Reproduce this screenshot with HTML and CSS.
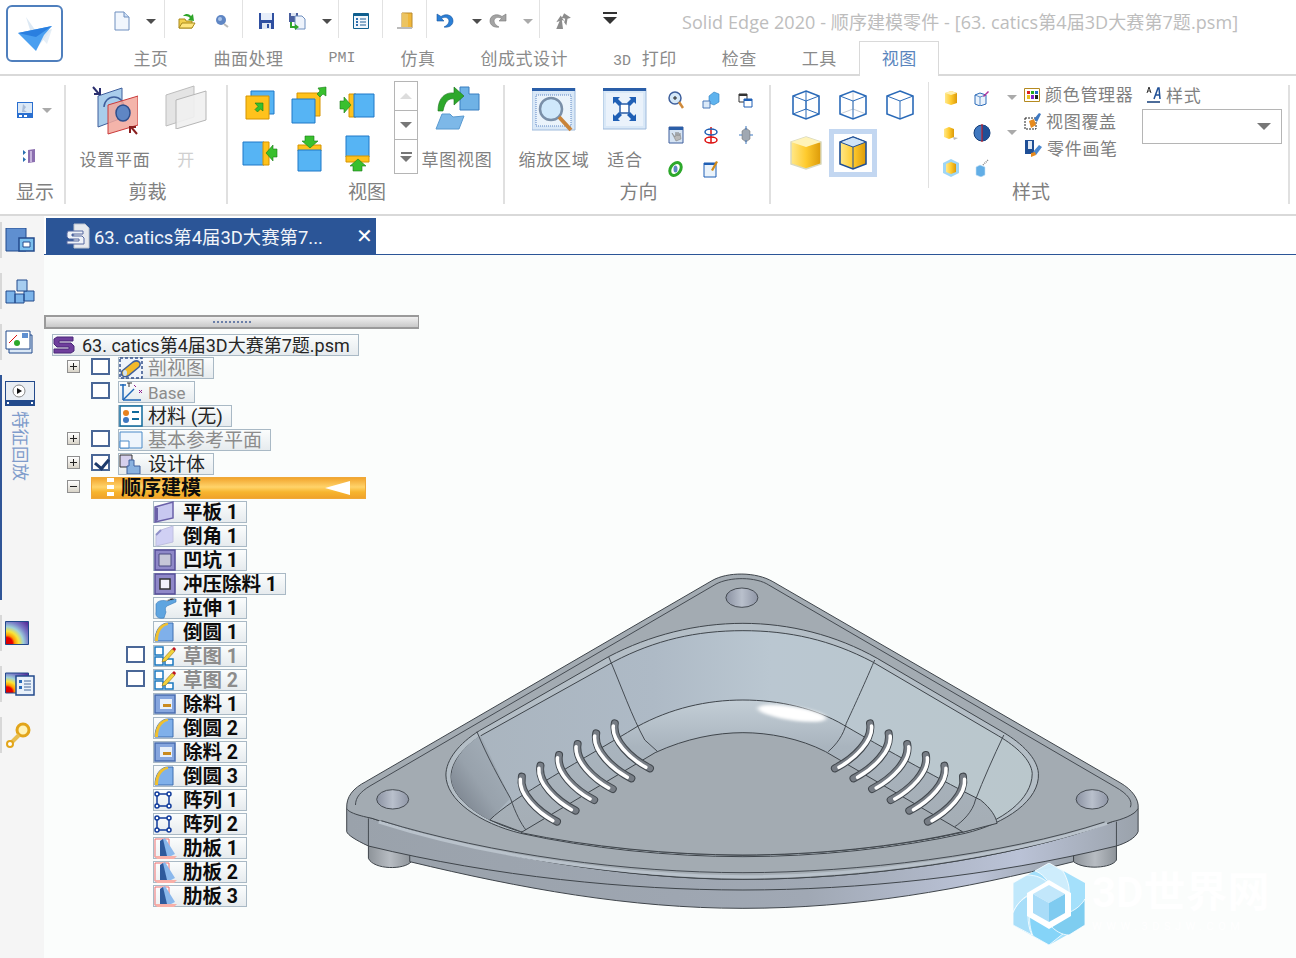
FILE: index.html
```html
<!DOCTYPE html>
<html lang="zh-CN">
<head>
    <meta charset="UTF-8">
    <title>Solid Edge 2020</title>
    <link rel="stylesheet" href="styles.css">
</head>
<body>

<!-- ICONS -->
<svg class="defs" width="0" height="0">
    <symbol id="new" viewBox="0 0 16 20"><path d="M1 1h9l5 5v13H1z" fill="#f1f6fd" stroke="#6f8fbf"/><path d="M10 1v5h5" fill="#cfe0f5" stroke="#6f8fbf"/></symbol>
    <symbol id="open" viewBox="0 0 18 18"><path d="M1 16V7h6l1 2h6v7z" fill="#f2cf4e" stroke="#a98a1c"/><path d="M1 16l3-5h13l-3 5z" fill="#ffe680" stroke="#a98a1c"/><path d="M5 4c3-3 6-2 8 0l2-2 1 7-6-1 2-2c-2-2-4-2-7-2z" fill="#2fa52a"/></symbol>
    <symbol id="ball" viewBox="0 0 14 14"><circle cx="6" cy="6" r="5" fill="#5f86c4"/><circle cx="5" cy="5" r="2" fill="#a9c3e8"/><path d="M9 10l4 3" stroke="#bbb" stroke-width="2"/></symbol>
    <symbol id="save" viewBox="0 0 17 16"><path d="M1 0h15v16H1z" fill="#2f4fa0"/><path d="M3 0h11v7H3z" fill="#e7eefa"/><path d="M4 10h9v6H4z" fill="#dfe6f2"/><path d="M9 11h2v4H9z" fill="#2f4fa0"/></symbol>
    <symbol id="saveas" viewBox="0 0 17 17"><path d="M0 0h9v9H0z" fill="#4a5f9e"/><path d="M2 0h5v3H2z" fill="#dfe6f2"/><path d="M6 3h7l3 3v10H6z" fill="#eef3fb" stroke="#6f8fbf"/><path d="M3 9v4h3v-2l4 3-4 3v-2H1V9z" fill="#2fa52a"/></symbol>
    <symbol id="list" viewBox="0 0 16 16"><path d="M.5.5h15v15H.5z" fill="#f1f7fd" stroke="#0f5f8f"/><path d="M1 1h14v2H1z" fill="#0f5f8f"/><path d="M3 5h2v2H3zM3 8h2v2H3zM3 11h2v2H3z" fill="#2f6fb0"/><path d="M7 6h6M7 9h6M7 12h6" stroke="#1d5f96"/></symbol>
    <symbol id="door" viewBox="0 0 17 18"><path d="M6 1h10v15H6z" fill="#f0b73a" stroke="#b88a30"/><path d="M6 1l6 1v15l-6-1z" fill="#ecc462"/><path d="M1 16h15" stroke="#bbb" stroke-width="2"/></symbol>
    <symbol id="undo" viewBox="0 0 18 16"><path d="M1 1v7h7L5.500 5.500C9 3 13 5 13 8s-3 5-5 6c5 1 9-2 9-6 0-6-7-8-12-4.500z" fill="#2a7fd6" stroke="#1a55a0" stroke-width=".6"/></symbol>
    <symbol id="redo" viewBox="0 0 18 16"><g transform="matrix(-1 0 0 1 18 0)"><path d="M1 1v7h7L5.500 5.500C9 3 13 5 13 8s-3 5-5 6c5 1 9-2 9-6 0-6-7-8-12-4.500z" fill="#a4a4a4" stroke="#777" stroke-width=".6"/></g></symbol>
    <symbol id="arrows" viewBox="0 0 16 16"><path d="M2 15l3-7-3 1 4-6 3 5-2-1 1 8zM9 1l6 4-3 1-1 6-2-3 1-3-3-1z" fill="#8c8c8c"/></symbol>

    <symbol id="display" viewBox="0 0 16 16"><path d="M0 0h16v16H0z" fill="#2a6fd0"/><path d="M1 1h14v10H1z" fill="#dbe8f6"/><path d="M6 2l3 3-2 3 3 2H5z" fill="#a8bcd8"/><path d="M2 13h3v2H2zM7 13h3v2H7z" fill="#fff"/></symbol>
    <symbol id="fit-book" viewBox="0 0 14 16"><path d="M6 2l7-1v13l-7 1z" fill="#8c6fb0"/><path d="M8 3h2v11H8z" fill="#c6b4dc"/><path d="M1 2l3 2.500L1 7zM1 9l3 2.500L1 14z" fill="#2a6fb0"/></symbol>
    <symbol id="plane-set" viewBox="0 0 46 50">
        <path d="M6 11l24-8v30L6 42z" fill="#a9cdeb" stroke="#3e5f9c"/>
        <path d="M12 22a10 10 0 0 1 20 0" fill="none" stroke="#3e5f9c" stroke-width="1.500"/>
        <path d="M16 20l30-9v29l-30 9z" fill="#f2a79b" fill-opacity=".85" stroke="#c93a3a"/>
        <ellipse cx="31" cy="28" rx="7" ry="8" fill="#5f86c4" stroke="#2f4f8c" stroke-width="1.500"/>
        <path d="M1 2l6 7M8 3v6H2" stroke="#2b2f6f" stroke-width="2" fill="none"/>
        <path d="M45 49l-6-7M38 48v-6h6" stroke="#8a1f1f" stroke-width="2" fill="none"/>
    </symbol>
    <symbol id="plane-off" viewBox="0 0 42 44"><path d="M1 10l28-9v31L1 41z" fill="#e4e4e4" stroke="#bdbdbd"/><path d="M11 15l30-9v29l-30 9z" fill="#efefef" fill-opacity=".9" stroke="#b5b5b5"/></symbol>

    <symbol id="v1" viewBox="0 0 30 30"><path d="M6 1h23v23H6z" fill="#56b4f4" stroke="#1e78c8"/><path d="M1 6h23v23H1z" fill="#ffc21c" stroke="#d69400"/><path d="M10 13h8v8l-2.500-2-3 3-2.500-2.500 3-3z" fill="#39c02e" stroke="#1a7a18" stroke-width=".6"/></symbol>
    <symbol id="v2" viewBox="0 0 36 38"><path d="M6 7h23v23H6z" fill="#ffc21c" stroke="#d69400"/><path d="M1 13h23v24H1z" fill="#56b4f4" stroke="#1e78c8"/><path d="M35 1v9l-3-2-3 3-3-3 3-3-2-3z" fill="#39c02e" stroke="#1a7a18" stroke-width=".6"/></symbol>
    <symbol id="v3" viewBox="0 0 36 26"><path d="M10 2h7v23h-7z" fill="#ffc21c" stroke="#d69400"/><path d="M15 2h20v23H15z" fill="#56b4f4" stroke="#1e78c8"/><path d="M1 9h4V5l7 8-7 8v-4H1z" fill="#39c02e" stroke="#1a7a18" stroke-width=".6"/></symbol>
    <symbol id="v4" viewBox="0 0 36 26"><path d="M1 2h21v23H1z" fill="#56b4f4" stroke="#1e78c8"/><path d="M21 2h6v23h-6z" fill="#ffc21c" stroke="#d69400"/><path d="M35 9h-4V5l-7 8 7 8v-4h4z" fill="#39c02e" stroke="#1a7a18" stroke-width=".6"/></symbol>
    <symbol id="v5" viewBox="0 0 26 37"><path d="M2 10h23v6H2z" fill="#ffc21c" stroke="#d69400"/><path d="M2 15h23v21H2z" fill="#56b4f4" stroke="#1e78c8"/><path d="M9 1h9v5h4l-8 7-8-7h3z" fill="#39c02e" stroke="#1a7a18" stroke-width=".6"/></symbol>
    <symbol id="v6" viewBox="0 0 26 37"><path d="M2 1h23v21H2z" fill="#56b4f4" stroke="#1e78c8"/><path d="M2 21h23v6H2z" fill="#ffc21c" stroke="#d69400"/><path d="M9 36h9v-5h4l-8-7-8 7h3z" fill="#39c02e" stroke="#1a7a18" stroke-width=".6"/></symbol>
    <symbol id="sketchview" viewBox="0 0 46 46"><path d="M26 2h9v7h10v16H26z" fill="#6fb2e6" stroke="#3b7fc0"/><path d="M2 44l6-15h8l3 3 11-1-5 13z" fill="#7db8e8" stroke="#5a9ad0"/><path d="M4 26C4 12 12 7 20 8V2l10 9-10 9v-6c-5-1-9 2-11 12z" fill="#2da82b" stroke="#17701a" stroke-width=".6"/></symbol>

    <symbol id="zoomarea" viewBox="0 0 44 48"><path d="M0 0h43v42H0z" fill="#d9e8f7" stroke="#9fbbdc"/><path d="M0 0h43v3H0z" fill="#2a5ea8"/><path d="M4 7h35v31H4z" fill="#eaf3fb" stroke="#5f86c4" stroke-dasharray="1 1"/><circle cx="19" cy="21" r="11" fill="#cfe8fb" stroke="#7a8fa8" stroke-width="2.500"/><path d="M27 29l12 13" stroke="#c9843a" stroke-width="4"/></symbol>
    <symbol id="fit" viewBox="0 0 44 42"><path d="M0 0h43v41H0z" fill="#d9e8f7" stroke="#9fbbdc"/><path d="M0 0h43v3H0z" fill="#2a5ea8"/><path d="M3 5h37v33H3z" fill="#eaf2fb"/><path d="M17 16h9v9h-9z" fill="#fff" stroke="#2a5ea8" stroke-width="1.500"/><path d="M10 9h7l-2 2 4 4-3 3-4-4-2 2zM33 9h-7l2 2-4 4 3 3 4-4 2 2zM10 33h7l-2-2 4-4-3-3-4 4-2-2zM33 33h-7l2-2-4-4 3-3 4 4 2-2z" fill="#1f5fb5"/></symbol>
    <symbol id="mag" viewBox="0 0 16 18"><circle cx="7" cy="7" r="6" fill="#d6e9f8" stroke="#3e5f9c" stroke-width="1.500"/><path d="M5 7h4M7 5v4" stroke="#222"/><path d="M11 11l4 6" stroke="#d08a3a" stroke-width="2.500"/></symbol>
    <symbol id="cube-mv" viewBox="0 0 18 18"><path d="M7 5l5-4 5 2v8l-5 3-5-2z" fill="#5fb3ee" stroke="#2f7fc0" stroke-width=".6"/><path d="M1 10h7v7H1z" fill="#dbe9f8" stroke="#4a78b8"/></symbol>
    <symbol id="windows" viewBox="0 0 15 15"><path d="M1 1h8v8H1z" fill="#fff" stroke="#333"/><path d="M1 1h8v2H1z" fill="#333"/><path d="M6 6h8v8H6z" fill="#fff" stroke="#1f5fb5"/><path d="M6 6h8v2H6z" fill="#1f5fb5"/></symbol>
    <symbol id="hand" viewBox="0 0 16 18"><path d="M1 1h14v16H1z" fill="#d5e3f3" stroke="#3e5f9c"/><path d="M1 1h14v3H1z" fill="#2a5ea8"/><path d="M4 7l4 8 5-2-1-6-1 3-1-4-1 4-1-4-1 5z" fill="#b9b9b9" stroke="#777" stroke-width=".5"/></symbol>
    <symbol id="rotate" viewBox="0 0 16 18"><path d="M8 1v16" stroke="#d11" stroke-width="1.500"/><ellipse cx="8" cy="6" rx="6" ry="3" fill="none" stroke="#1f5fb5" stroke-width="1.500"/><ellipse cx="8" cy="14" rx="6" ry="3" fill="none" stroke="#d11" stroke-width="1.500"/></symbol>
    <symbol id="spin" viewBox="0 0 14 18"><path d="M3 5l4-3 4 3v8l-4 3-4-3z" fill="#a0a8b2" stroke="#666" stroke-width=".5"/><path d="M7 0v4M7 14v4M0 9h3M11 9h3" stroke="#3f78c0"/></symbol>
    <symbol id="orbit" viewBox="0 0 15 18"><ellipse cx="7.500" cy="9" rx="5" ry="7" fill="none" stroke="#2da82b" stroke-width="3" transform="rotate(35 7.500 9)"/><ellipse cx="7.500" cy="9" rx="2" ry="3.500" fill="#5f86c4"/></symbol>
    <symbol id="note" viewBox="0 0 15 18"><path d="M1 3h12v14H1z" fill="#eaf3fb" stroke="#1f5fb5"/><path d="M1 3h12v2H1z" fill="#1f5fb5"/><path d="M8 10l5-9 2 1-5 9z" fill="#d08a1a"/></symbol>

    <symbol id="box-wire" viewBox="0 0 30 30"><path d="M15 1l13 5v18l-13 5-13-5V6z" fill="none" stroke="#2a6ab8" stroke-width="1.600"/><path d="M2 6l13 5 13-5M15 11v18M2 24l13-5 13 5M15 1v18" fill="none" stroke="#2a6ab8"/></symbol>
    <symbol id="box-gray" viewBox="0 0 30 30"><path d="M2 24l13-5 13 5M15 1v18" fill="none" stroke="#c8ced6"/><path d="M15 1l13 5v18l-13 5-13-5V6z" fill="none" stroke="#2a6ab8" stroke-width="1.600"/><path d="M2 6l13 5 13-5M15 11v18" fill="none" stroke="#2a6ab8"/></symbol>
    <symbol id="box-hidden" viewBox="0 0 30 30"><path d="M15 1l13 5v18l-13 5-13-5V6z" fill="none" stroke="#2a6ab8" stroke-width="1.600"/><path d="M2 6l13 5 13-5M15 11v18" fill="none" stroke="#2a6ab8"/></symbol>
    <linearGradient id="yel" x1="0" x2="1" y1="0" y2="0"><stop offset="0" stop-color="#ffe88a"/><stop offset=".5" stop-color="#ffcb2e"/><stop offset="1" stop-color="#dc9a08"/></linearGradient>
    <radialGradient id="hg" cx="0.05" cy="0.95" r="1.250"><stop offset="0" stop-color="#d80000"/><stop offset=".2" stop-color="#e80000"/><stop offset=".28" stop-color="#ff9a00"/><stop offset=".42" stop-color="#f8e63a"/><stop offset=".58" stop-color="#9fd0d8"/><stop offset=".75" stop-color="#7a7fc8"/><stop offset="1" stop-color="#5a2f9c"/></radialGradient>
    <symbol id="box-solid" viewBox="0 0 34 34"><path d="M17 1l15 5v22l-15 5-15-5V6z" fill="url(#yel)" stroke="#d9d9c0" stroke-width="1.500"/><path d="M2 6l15 5 15-5-15-5z" fill="#fff3b8"/></symbol>
    <symbol id="box-edge" viewBox="0 0 30 34"><path d="M15 1l13 5v22l-13 5-13-5V6z" fill="url(#yel)" stroke="#1f4f96" stroke-width="1.600"/><path d="M2 6l13 5 13-5-13-5z" fill="#cfe3f6" stroke="#1f4f96"/><path d="M15 11v22" stroke="#1f4f96"/></symbol>
    <symbol id="s-gold" viewBox="0 0 14 16"><path d="M7 1l6 2v10l-6 2-6-2V3z" fill="url(#yel)"/><path d="M1 3l6 2 6-2-6-2z" fill="#fff0b0"/></symbol>
    <symbol id="s-wire" viewBox="0 0 16 16"><path d="M6 3l6 2v9l-6 2-5-2V5z" fill="#eaf2fb" stroke="#2a6ab8"/><path d="M1 5l5 2 6-2M6 7v9" fill="none" stroke="#2a6ab8" stroke-width=".7"/><path d="M9 6l5-5 1 1-5 5z" fill="#b0309a"/></symbol>
    <symbol id="s-shadow" viewBox="0 0 16 14"><path d="M6 1l5 2v8l-5 2-5-2V3z" fill="url(#yel)"/><path d="M10 11l5 1-4 2z" fill="#bbb"/></symbol>
    <symbol id="s-sphere" viewBox="0 0 18 18"><circle cx="9" cy="9" r="8" fill="#3f78c0" stroke="#123c78"/><path d="M9 1a8 8 0 0 1 0 16z" fill="#1f4f96"/><path d="M9 0v18" stroke="#d11"/></symbol>
    <symbol id="s-glow" viewBox="0 0 16 18"><path d="M8 0l8 4v10l-8 4-8-4V4z" fill="#9fd6f6"/><path d="M8 3l5 2v8l-5 2-5-2V5z" fill="url(#yel)"/></symbol>
    <symbol id="s-spray" viewBox="0 0 16 18"><path d="M6 6l5 2v8l-4 2-5-2V8z" fill="#62aee6" stroke="#c9e2f6" stroke-width=".6"/><path d="M9 6l5-5" stroke="#888" stroke-dasharray="1 1" stroke-width="1.500"/></symbol>
    <symbol id="c-color" viewBox="0 0 16 16"><path d="M.5 2.500h15v13H.5z" fill="#fff" stroke="#b58a20"/><path d="M3 5h3v3H3z" fill="#d22"/><path d="M7 5h3v3H7z" fill="#2a2"/><path d="M11 5h3v3h-3z" fill="#26c"/><path d="M3 9h3v4H3z" fill="#e7c122"/><path d="M7 9h3v4H7z" fill="#82c"/><path d="M11 9h3v4h-3z" fill="#222"/></symbol>
    <symbol id="c-over" viewBox="0 0 17 18"><path d="M1 6h11v11H1z" fill="#fff" stroke="#222" stroke-dasharray="2 1"/><path d="M5 9l5-2 2 6-5 3z" fill="#e58a1f"/><path d="M10 7l5-6 2 1-4 8z" fill="#3f78c0"/></symbol>
    <symbol id="c-brush" viewBox="0 0 18 18"><path d="M1 1h9v14H1z" fill="#1f4f96"/><path d="M4 2h4v8H4z" fill="#dfe8f4"/><path d="M9 13l6-7 3 2-6 8z" fill="#4a88d0"/><path d="M7 14l4-1 1 3-5 2z" fill="#e58a1f"/></symbol>
    <symbol id="c-style" viewBox="0 0 15 17"><path d="M1 16h13" stroke="#123c78" stroke-width="1.500"/><path d="M8 13l4-11h1l1 11M9 9h4" fill="none" stroke="#1f4f96" stroke-width="1.500"/><path d="M1 7l2-6 2 6M2 5h2" fill="none" stroke="#333"/></symbol>

    <symbol id="t-doc" viewBox="0 0 24 26"><path d="M8 1h11l4 4v20H8z" fill="#e6e9ee" stroke="#bcc3cd"/><path d="M2 8h15v3H6v2h10l2 2v6H1v-3h12v-2H3l-2-2v-4z" fill="#eef2f8" stroke="#5668a0" stroke-width="1"/></symbol>
    <symbol id="t-s" viewBox="0 0 22 18"><path d="M4 1h16v4H6v2h12l3 3v5l-3 2H1v-4h15v-2H4L1 8V3z" fill="#6f3f9c" stroke="#4a2878"/></symbol>
    <symbol id="t-section" viewBox="0 0 24 22"><path d="M1 1h22v20H1z" fill="#eef3fb" stroke="#33508c" stroke-dasharray="3 2" stroke-width="1.500"/><path d="M3 14L14 5c5-3 9 1 6 5L9 19c-5 2-8-1-6-5z" fill="#f2b92b" stroke="#3e5f9c" stroke-width="1.500"/><ellipse cx="6" cy="16" rx="2" ry="3" fill="#cfe3f6"/></symbol>
    <symbol id="t-base" viewBox="0 0 24 22"><path d="M4 19V3M1 4h6M4 19h18" stroke="#2068b8" stroke-width="1.500"/><path d="M4 19L15 8" stroke="#2068b8" stroke-width="1.500"/><path d="M8 2h5M10 2v4" stroke="#333"/><path d="M15 4l2 2M20 9l3 3m0-3l-3 3" stroke="#90208f"/></symbol>
    <symbol id="t-mat" viewBox="0 0 24 22"><path d="M1 1h22v20H1z" fill="#fff" stroke="#0f6a9c" stroke-width="1.500"/><circle cx="7" cy="8" r="3" fill="#e8821e"/><circle cx="7" cy="15" r="3" fill="#3f78c0"/><path d="M13 7h7M13 14h7" stroke="#0f6a9c" stroke-width="2"/></symbol>
    <symbol id="t-plane" viewBox="0 0 24 20"><path d="M1 2h22v16H1z" fill="#eef5fc" stroke="#4a8ac8"/><path d="M1 11h9v7H1z" fill="#fff" stroke="#4a8ac8"/></symbol>
    <symbol id="t-body" viewBox="0 0 22 20"><path d="M1 1h12v12H1z" fill="#d6d0ec" stroke="#333"/><path d="M10 6h5v6h6v8H8v-8h2z" fill="#8ab2e0" stroke="#3e5f9c"/></symbol>
    <symbol id="t-plate" viewBox="0 0 22 22"><path d="M1 6L19 1v16L1 21z" fill="#c8c8f0" stroke="#6a60a8" stroke-width="1.500"/><path d="M1 6l3 1v12l-3 2z" fill="#6a60a8"/></symbol>
    <symbol id="t-chamfer" viewBox="0 0 22 22"><path d="M7 5L19 1v16L2 21V10z" fill="#d0d0f4" stroke="#c0c0e0"/><path d="M2 10l5-5" stroke="#8f8fc8" stroke-width="2"/></symbol>
    <symbol id="t-dimple" viewBox="0 0 22 22"><path d="M1 1h20v20H1z" fill="#8f88c8" stroke="#564e98" stroke-width="1.500"/><path d="M5 5h12v12H5z" fill="#c6c6d8" stroke="#4a4a80"/></symbol>
    <symbol id="t-punch" viewBox="0 0 22 22"><path d="M1 1h20v20H1z" fill="#8f88c8" stroke="#564e98" stroke-width="1.500"/><path d="M6 6h10v10H6z" fill="#f2f2fa" stroke="#333" stroke-width="1.500"/></symbol>
    <symbol id="t-extrude" viewBox="0 0 24 22"><path d="M2 7c2-4 8-4 11-3l9-2v3l-9 4c-2 1-2 4-1 6l-2 6c-5 1-9-1-8-6z" fill="#5fa5e0" stroke="#3a7ab8" stroke-width=".6"/><path d="M12 4l6-3 3 1" stroke="#bbb"/></symbol>
    <symbol id="t-round" viewBox="0 0 20 20"><path d="M1 19C1 9 6 1 14 1h5v18z" fill="#7fb0ea" stroke="#3e6fb0"/><path d="M1 19C1 9 6 1 14 1v2C8 4 4 10 4 19z" fill="#f0c030"/></symbol>
    <symbol id="t-sketch" viewBox="0 0 22 20"><path d="M1 1h8v8H1zM1 11h8v8H1zM11 13h8v6h-8z" fill="#fff" stroke="#1a78c0" stroke-width="1.500"/><path d="M9 13L18 3l3 2-9 10-4 1z" fill="#f2d13c" stroke="#7a5f10" stroke-width=".5"/><path d="M18 3l2-2 2 2-1 2z" fill="#c0141c"/></symbol>
    <symbol id="t-cut" viewBox="0 0 22 20"><path d="M1 1h20v18H1z" fill="#86a6de" stroke="#4a6db0" stroke-width="1.500"/><path d="M6 5h12v10H6z" fill="#e8f0fa"/><path d="M9 10h8v3H9z" fill="#c98a1e"/></symbol>
    <symbol id="t-pattern" viewBox="0 0 18 18"><path d="M3 3h12v12H3z" fill="none" stroke="#123c9c" stroke-width="1.500"/><circle cx="3" cy="3" r="2" fill="#fff" stroke="#123c9c" stroke-width="1.500"/><circle cx="15" cy="3" r="2" fill="#fff" stroke="#123c9c" stroke-width="1.500"/><circle cx="3" cy="15" r="2" fill="#fff" stroke="#123c9c" stroke-width="1.500"/><circle cx="15" cy="15" r="2" fill="#fff" stroke="#123c9c" stroke-width="1.500"/></symbol>
    <symbol id="t-rib" viewBox="0 0 24 24"><path d="M1 3h14v18H1z" fill="#fff" fill-opacity=".3" stroke="#f07070"/><path d="M1 20h22l-3 3H3z" fill="#f8b0a8"/><path d="M6 5l5-3 10 16-4 2H6z" fill="#8ab8ec"/><path d="M6 5l3-2 4 17H6z" fill="#2f5a9c"/></symbol>

    <symbol id="r-env" viewBox="0 0 30 24"><path d="M1 0h20v23H1z" fill="#5f8fd0" stroke="#234a8c"/><path d="M14 10h15v13H14z" fill="#7cc0ee" stroke="#234a8c" stroke-width="1.500"/><path d="M18 14h7v5h-7z" fill="#fff" stroke="#234a8c"/></symbol>
    <symbol id="r-parts" viewBox="0 0 30 26"><path d="M1 13h9v12H1zM19 13h10v10H19zM10 16h9v9h-9z" fill="#7cb4ea" stroke="#234a8c"/><path d="M12 2h10v11H12z" fill="#a6cdf0" stroke="#234a8c"/></symbol>
    <symbol id="r-pic" viewBox="0 0 28 24"><path d="M4 5h23v18H4z" fill="#dbe8f6" stroke="#234a8c"/><path d="M1 1h24v18H1z" fill="#fff" stroke="#234a8c"/><path d="M4 13l8-8" stroke="#d11"/><circle cx="12" cy="13" r="3" fill="#2da82b"/><path d="M17 3h6v5h-6z" fill="#5f8fd0"/></symbol>
    <symbol id="r-play" viewBox="0 0 30 25"><path d="M0 0h30v25H0z" fill="#234a8c"/><path d="M1 1h28v18H1z" fill="#e9eef4"/><circle cx="14" cy="10" r="6" fill="#fff" stroke="#888"/><path d="M12 7l5 3-5 3z" fill="#111"/><path d="M2 21h2v2H2zM26 21h2v2h-2z" fill="#fff"/></symbol>
    <symbol id="heat" viewBox="0 0 24 24"><path d="M.5.500h23v23H.5z" fill="url(#hg)" stroke="#234a8c"/></symbol>
    <symbol id="heat-list" viewBox="0 0 30 24"><path d="M.5 1h23v20H.5z" fill="url(#hg)" stroke="#234a8c"/><path d="M11 4h18v19H11z" fill="#e9f1fa" stroke="#234a8c" stroke-width="1.500"/><path d="M14 8h3v3h-3zM14 14h3v3h-3z" fill="#2a6ab8"/><path d="M19 9h7M19 12h7M19 15h7M19 18h7" stroke="#44689c"/></symbol>
    <symbol id="key" viewBox="0 0 27 28"><circle cx="18" cy="9" r="6" fill="#fff3b8" stroke="#e2a51a" stroke-width="3"/><path d="M14 14L5 23" stroke="#e8be50" stroke-width="4"/><circle cx="5" cy="23" r="3" fill="#fff" stroke="#e2a51a" stroke-width="2"/></symbol>
</svg>

<header class="top">
    <div class="app-btn">
        <svg width="38" height="38" viewBox="0 0 38 38">
            <path d="M10 2l12 17 14-5-16 20z" fill="#cfe0f0" fill-opacity=".7"/>
            <path d="M22 19l-6 5 20-10-5 15z" fill="#dce8f4" fill-opacity=".7"/>
            <path d="M2 18l34-7-8 9-8 16z" fill="#4a9ff0"/>
            <path d="M2 18l18 4 16-11z" fill="#2a7fe0"/>
        </svg>
    </div>
    <div class="top-main">
        <div class="qat">
            <div class="qg qg1"><svg width="16" height="20"><use href="#new"/></svg><i class="caret dark"></i></div>
            <div class="qg qg2"><svg width="18" height="18"><use href="#open"/></svg><svg width="14" height="14"><use href="#ball"/></svg></div>
            <div class="qg qg3"><svg width="17" height="16"><use href="#save"/></svg><svg width="17" height="17"><use href="#saveas"/></svg><i class="caret dark"></i></div>
            <div class="qg qg4"><svg width="16" height="16"><use href="#list"/></svg></div>
            <div class="qg qg5"><svg width="17" height="18"><use href="#door"/></svg></div>
            <div class="qg qg6"><svg width="18" height="16"><use href="#undo"/></svg><i class="caret dark"></i><svg width="18" height="16"><use href="#redo"/></svg><i class="caret"></i></div>
            <div class="qg qg7"><svg width="18" height="18"><use href="#arrows"/></svg><span class="more"></span></div>
            <div class="title">Solid Edge 2020 - 顺序建模零件 - [63. catics第4届3D大赛第7题.psm]</div>
        </div>
        <nav class="tabs">
            <div class="tab">主页</div>
            <div class="tab">曲面处理</div>
            <div class="tab mono">PMI</div>
            <div class="tab">仿真</div>
            <div class="tab">创成式设计</div>
            <div class="tab"><span class="mono gap">3D</span> 打印</div>
            <div class="tab">检查</div>
            <div class="tab">工具</div>
            <div class="tab active">视图</div>
        </nav>
    </div>
</header>

<section class="ribbon">

    <!-- 显示 -->
    <div class="group g-show">
        <div class="body show-body">
            <div class="show-row"><svg width="16" height="16"><use href="#display"/></svg><i class="caret"></i></div>
            <div class="show-row second"><svg width="14" height="16"><use href="#fit-book"/></svg></div>
        </div>
        <div class="label">显示</div>
    </div>

    <!-- 剪裁 -->
    <div class="group g-clip">
        <div class="body clip-body">
            <div class="big w70"><div class="big-ico"><svg width="46" height="50"><use href="#plane-set"/></svg></div><span>设置平面</span></div>
            <div class="big w40 off"><div class="big-ico"><svg width="42" height="44"><use href="#plane-off"/></svg></div><span>开</span></div>
        </div>
        <div class="label">剪裁</div>
    </div>

    <!-- 视图 -->
    <div class="group g-view">
        <div class="body view-body">
            <div class="view-grid">
                <svg width="30" height="30"><use href="#v1"/></svg>
                <svg width="36" height="38"><use href="#v2"/></svg>
                <svg width="36" height="26"><use href="#v3"/></svg>
                <svg width="36" height="26"><use href="#v4"/></svg>
                <svg width="26" height="37"><use href="#v5"/></svg>
                <svg width="26" height="37"><use href="#v6"/></svg>
            </div>
            <div class="spin">
                <div class="spin-cell"><i class="tri up"></i></div>
                <div class="spin-cell"><i class="tri"></i></div>
                <div class="spin-cell last"><b></b><i class="tri"></i></div>
            </div>
            <div class="big w72"><div class="big-ico"><svg width="46" height="46"><use href="#sketchview"/></svg></div><span>草图视图</span></div>
        </div>
        <div class="label">视图</div>
    </div>

    <!-- 方向 -->
    <div class="group g-dir">
        <div class="body dir-body">
            <div class="big w72"><div class="big-ico low"><svg width="44" height="48"><use href="#zoomarea"/></svg></div><span>缩放区域</span></div>
            <div class="big w70"><div class="big-ico low"><svg width="44" height="42"><use href="#fit"/></svg></div><span>适合</span></div>
            <div class="small-grid">
                <svg width="16" height="18"><use href="#mag"/></svg>
                <svg width="18" height="18"><use href="#cube-mv"/></svg>
                <svg width="15" height="15"><use href="#windows"/></svg>
                <svg width="16" height="18"><use href="#hand"/></svg>
                <svg width="16" height="18"><use href="#rotate"/></svg>
                <svg width="14" height="18"><use href="#spin"/></svg>
                <svg width="15" height="18"><use href="#orbit"/></svg>
                <svg width="15" height="18"><use href="#note"/></svg>
            </div>
        </div>
        <div class="label">方向</div>
    </div>

    <!-- 样式 -->
    <div class="group g-style">
        <div class="body style-body">
            <div class="box-grid">
                <svg width="30" height="30"><use href="#box-wire"/></svg>
                <svg width="30" height="30"><use href="#box-gray"/></svg>
                <svg width="30" height="30"><use href="#box-hidden"/></svg>
                <svg width="34" height="34"><use href="#box-solid"/></svg>
                <div class="picked"><svg width="30" height="34"><use href="#box-edge"/></svg></div>
            </div>
            <div class="style-tools">
                <svg width="14" height="16"><use href="#s-gold"/></svg>
                <svg width="16" height="16"><use href="#s-wire"/></svg>
                <i class="caret"></i>
                <svg width="16" height="14"><use href="#s-shadow"/></svg>
                <svg width="18" height="18"><use href="#s-sphere"/></svg>
                <i class="caret"></i>
                <svg width="16" height="18"><use href="#s-glow"/></svg>
                <svg width="16" height="18"><use href="#s-spray"/></svg>
            </div>
            <div class="cmds">
                <div class="cmd"><svg width="16" height="16"><use href="#c-color"/></svg>颜色管理器</div>
                <div class="cmd"><svg width="17" height="18"><use href="#c-over"/></svg>视图覆盖</div>
                <div class="cmd"><svg width="18" height="18"><use href="#c-brush"/></svg>零件画笔</div>
            </div>
            <div class="style-pick">
                <div class="cmd"><svg width="15" height="17"><use href="#c-style"/></svg>样式</div>
                <div class="select"><i class="tri big-tri"></i></div>
            </div>
        </div>
        <div class="label">样式</div>
    </div>
</section>

<div class="work">
    <aside class="rail">
        <div class="rail-btn"><svg width="30" height="24"><use href="#r-env"/></svg></div>
        <div class="rail-btn"><svg width="30" height="26"><use href="#r-parts"/></svg></div>
        <div class="rail-btn"><svg width="28" height="24"><use href="#r-pic"/></svg></div>
        <div class="rail-panel">
            <svg width="30" height="25"><use href="#r-play"/></svg>
            <div class="rail-text">特征回放</div>
        </div>
        <div class="rail-btn"><svg width="24" height="24"><use href="#heat"/></svg></div>
        <div class="rail-btn"><svg width="30" height="24"><use href="#heat-list"/></svg></div>
        <div class="rail-btn"><svg width="27" height="28"><use href="#key"/></svg></div>
    </aside>

    <main class="doc">
        <div class="doc-tabs">
            <div class="doc-tab">
                <svg width="24" height="26"><use href="#t-doc"/></svg>
                <span class="doc-name">63. catics第4届3D大赛第7...</span>
                <span class="doc-close">✕</span>
            </div>
        </div>

        <div class="canvas">

            <!-- MODEL -->
            <svg class="model" width="810" height="360" viewBox="0 0 1568 1080" preserveAspectRatio="none">
                <defs>
                    <linearGradient id="wall" x1="0" x2="1" y1="0" y2="0">
                        <stop offset="0" stop-color="#9aa2ab"/><stop offset=".6" stop-color="#a0a8b4"/><stop offset=".85" stop-color="#bac2d6"/><stop offset="1" stop-color="#9aa2ab"/>
                    </linearGradient>
                    <linearGradient id="bowl" x1="0" x2="1" y1="0" y2="0">
                        <stop offset="0" stop-color="#a9b4be"/><stop offset=".35" stop-color="#aebac6"/><stop offset=".55" stop-color="#bac7d1"/><stop offset="1" stop-color="#bac7cc"/>
                    </linearGradient>
                    <linearGradient id="dark" x1="0" x2="1" y1="1" y2="0">
                        <stop offset="0" stop-color="#6f7782"/><stop offset=".45" stop-color="#98a2ac"/><stop offset="1" stop-color="#a9b4be"/>
                    </linearGradient>
                    <linearGradient id="fillet" x1="0" x2="0" y1="0" y2="1">
                        <stop offset="0" stop-color="#c3ced6"/><stop offset=".3" stop-color="#a9b4be"/><stop offset="1" stop-color="#a3abb2"/>
                    </linearGradient>
                    <linearGradient id="hole" x1="0" x2="1" y1="0" y2="0">
                        <stop offset="0" stop-color="#8b92a2"/><stop offset=".5" stop-color="#b9c0cc"/><stop offset="1" stop-color="#8f96a6"/>
                    </linearGradient>
                    <linearGradient id="foot" x1="0" x2="1" y1="0" y2="0">
                        <stop offset="0" stop-color="#8d9399"/><stop offset=".5" stop-color="#b7bcc2"/><stop offset="1" stop-color="#8d9399"/>
                    </linearGradient>
                    <filter id="soft" x="-30%" y="-80%" width="160%" height="260%"><feGaussianBlur stdDeviation="4"/></filter>
                    <g id="slot">
                        <path class="slot-a" d="M0 0C-6 50 30 105 68 135"/>
                        <path class="slot-b" d="M0 0C-6 50 30 105 68 135"/>
                        <path class="slot-c" d="M-3 8C-6 52 28 104 60 132"/>
                    </g>
                    <g id="slots">
                        <use href="#slot" x="352" y="650"/>
                        <use href="#slot" x="388" y="617"/>
                        <use href="#slot" x="424" y="585"/>
                        <use href="#slot" x="460" y="552"/>
                        <use href="#slot" x="496" y="520"/>
                        <use href="#slot" x="532" y="490"/>
                    </g>
                </defs>

                <path class="edge" fill="url(#foot)" d="M55 840V895C65 930 125 930 138 905V840Z"/>
                <path class="edge" fill="url(#foot)" d="M1420 840V905C1440 930 1495 925 1503 900V840Z"/>
                <path class="edge" fill="url(#wall)" d="M135 850V905C350 985 560 1045 780 1045C1000 1045 1200 990 1420 905V850Z"/>
                <path class="edge" fill="url(#wall)" d="M13 745L62 775C280 890 560 958 780 958C1000 958 1300 900 1495 785L1545 745V815C1540 835 1520 850 1503 858C1260 950 1000 990 780 990C560 990 300 950 55 858C30 840 15 825 13 815Z"/>
                <path class="line" d="M55 775V858M1503 785V858"/>
                <path class="edge" fill="#a3abb2" d="M720 62C750 35 805 35 838 65L1510 668C1535 690 1547 720 1545 745C1540 765 1510 780 1495 785C1300 900 1000 958 780 958C560 958 280 890 62 775C30 765 15 755 13 745C12 710 25 685 50 665Z"/>
                <path class="band" d="M75 786C290 892 560 950 780 950C1000 950 1290 892 1485 790"/>
                <path class="line" d="M80 782C295 885 560 938 780 938C1000 938 1285 885 1480 786"/>
                <path class="line" d="M728 72C755 50 805 50 830 75L1500 680C1525 702 1535 722 1530 742M30 735C30 712 40 695 58 678L728 72"/>

                <!-- bowl -->
                <path class="edge" fill="#b4bec6" d="M270 512C230 550 205 600 205 645C205 720 270 790 350 820C480 865 640 890 780 890C920 890 1080 865 1210 820C1290 790 1355 720 1352 640C1350 595 1320 550 1285 518L1040 295C960 225 870 190 780 190C690 190 600 225 520 290Z"/>
                <path class="edge" fill="url(#bowl)" d="M275 525C240 560 215 605 215 650C215 720 280 785 350 815C480 860 640 885 780 885C920 885 1080 860 1210 815C1280 785 1340 720 1340 640C1338 600 1310 560 1275 528L1030 305C950 240 870 212 780 212C690 212 610 240 530 305Z"/>
                <path fill="url(#dark)" d="M215 650C220 590 245 555 272 525L330 715L290 780C250 750 215 700 215 650Z"/>
                <path class="edge" fill="url(#fillet)" d="M290 780C330 715 480 590 575 500C640 445 710 420 780 420C850 420 920 445 975 495C1080 590 1200 690 1240 720C1260 745 1270 770 1272 790L1210 815C1080 860 920 885 780 885C640 885 480 860 350 815Z"/>
                <ellipse cx="875" cy="460" rx="68" ry="20" fill="#fff" transform="rotate(14 875 460)" filter="url(#soft)"/>
                <path class="edge" fill="#a3abb2" d="M350 818L610 578C670 535 730 518 780 518C830 518 890 535 940 575L1205 815C1080 860 920 885 780 885C640 885 480 860 350 818Z"/>
                <path class="line" d="M520 290C545 380 565 470 590 540L615 575M1035 300C1010 390 995 440 980 490C975 525 960 555 945 575M265 515C285 590 310 660 330 715C340 760 350 790 360 810M1285 525C1265 590 1245 660 1230 720C1225 755 1205 785 1190 800"/>
                <use href="#slots"/>
                <use href="#slots" transform="translate(1558 0) scale(-1 1)"/>

                <ellipse class="line hole" cx="778" cy="113" rx="31" ry="29"/>
                <ellipse class="line hole" cx="102" cy="718" rx="31" ry="29"/>
                <ellipse class="line hole" cx="1456" cy="718" rx="31" ry="29"/>
            </svg>

            <!-- WATERMARK -->
            <div class="mark">
                <svg width="72" height="82" viewBox="0 0 72 82">
                    <path d="M36 0l36 20v42L36 82 0 62V20z" fill="#8ed8fa" fill-opacity=".8"/>
                    <path d="M22 8L36 0l14 8c5 9 7 17 6 24L36 20C32 14 28 10 22 8z" fill="#d3eefc" fill-opacity=".9" stroke="#fff" stroke-width=".8"/>
                    <path d="M0 20l14-8c9 0 16 3 21 8L17 31C11 34 4 40 0 50z" fill="#c2e8fb" fill-opacity=".95" stroke="#fff" stroke-width=".8"/>
                    <path d="M0 50c3-8 9-14 15-17v20c0 6 1 13 4 19L0 62z" fill="#a8def9" stroke="#fff" stroke-width=".8"/>
                    <path d="M17 50l19 11 20 5-20 16-16-9c-3-7-4-15-3-23z" fill="#85d4f8" stroke="#fff" stroke-width=".8"/>
                    <path d="M36 61l21-12c7-3 12-8 15-13v26L56 72c-7 0-14-4-20-11z" fill="#7ecdf0" stroke="#fff" stroke-width=".8"/>
                    <path d="M36 17L58 30V53L36 66 14 53V30z" fill="#fff"/>
                    <path d="M36 22l16 9-16 9-16-9z" fill="#c2e7fb"/>
                    <path d="M20 31l16 9v19l-16-9z" fill="#a9dcf8"/>
                    <path d="M52 31L36 40v19l16-9z" fill="#7fcbf0"/>
                </svg>
                <div class="mark-text">
                    <div class="mark-big">3D世界网</div>
                    <div class="mark-small">WWW.3DSJW.COM</div>
                </div>
            </div>

            <!-- TREE -->
            <div class="tree">
                <div class="tree-bar"><span class="grip"></span></div>

                <div class="root"><span class="chip"><svg width="22" height="18"><use href="#t-s"/></svg><span class="dark-txt root-txt">63. catics第4届3D大赛第7题.psm</span></span></div>

                <div class="row"><i class="exp plus"></i><i class="check"></i><span class="chip"><svg width="24" height="22"><use href="#t-section"/></svg><span>剖视图</span></span></div>
                <div class="row"><i></i><i class="check"></i><span class="chip"><svg width="24" height="22"><use href="#t-base"/></svg><span class="latin">Base</span></span></div>
                <div class="row"><i></i><i></i><span class="chip"><svg width="24" height="22"><use href="#t-mat"/></svg><span class="dark-txt">材料 (无)</span></span></div>
                <div class="row"><i class="exp plus"></i><i class="check"></i><span class="chip"><svg width="24" height="20"><use href="#t-plane"/></svg><span>基本参考平面</span></span></div>
                <div class="row"><i class="exp plus"></i><i class="check on"></i><span class="chip"><svg width="22" height="20"><use href="#t-body"/></svg><span class="dark-txt">设计体</span></span></div>
                <div class="row"><i class="exp"></i><div class="seq"><span class="seq-grip"></span><span class="seq-txt">顺序建模</span><i class="seq-arrow"></i></div></div>

                <div class="row child"><i></i><span class="chip"><svg width="22" height="22"><use href="#t-plate"/></svg><b>平板 1</b></span></div>
                <div class="row child"><i></i><span class="chip"><svg width="22" height="22"><use href="#t-chamfer"/></svg><b>倒角 1</b></span></div>
                <div class="row child"><i></i><span class="chip"><svg width="22" height="22"><use href="#t-dimple"/></svg><b>凹坑 1</b></span></div>
                <div class="row child"><i></i><span class="chip"><svg width="22" height="22"><use href="#t-punch"/></svg><b>冲压除料 1</b></span></div>
                <div class="row child"><i></i><span class="chip"><svg width="24" height="22"><use href="#t-extrude"/></svg><b>拉伸 1</b></span></div>
                <div class="row child"><i></i><span class="chip"><svg width="20" height="20"><use href="#t-round"/></svg><b>倒圆 1</b></span></div>
                <div class="row child"><i class="check"></i><span class="chip"><svg width="22" height="20"><use href="#t-sketch"/></svg><b class="dim">草图 1</b></span></div>
                <div class="row child"><i class="check"></i><span class="chip"><svg width="22" height="20"><use href="#t-sketch"/></svg><b class="dim">草图 2</b></span></div>
                <div class="row child"><i></i><span class="chip"><svg width="22" height="20"><use href="#t-cut"/></svg><b>除料 1</b></span></div>
                <div class="row child"><i></i><span class="chip"><svg width="20" height="20"><use href="#t-round"/></svg><b>倒圆 2</b></span></div>
                <div class="row child"><i></i><span class="chip"><svg width="22" height="20"><use href="#t-cut"/></svg><b>除料 2</b></span></div>
                <div class="row child"><i></i><span class="chip"><svg width="20" height="20"><use href="#t-round"/></svg><b>倒圆 3</b></span></div>
                <div class="row child"><i></i><span class="chip"><svg width="18" height="18"><use href="#t-pattern"/></svg><b>阵列 1</b></span></div>
                <div class="row child"><i></i><span class="chip"><svg width="18" height="18"><use href="#t-pattern"/></svg><b>阵列 2</b></span></div>
                <div class="row child"><i></i><span class="chip"><svg width="24" height="24"><use href="#t-rib"/></svg><b>肋板 1</b></span></div>
                <div class="row child"><i></i><span class="chip"><svg width="24" height="24"><use href="#t-rib"/></svg><b>肋板 2</b></span></div>
                <div class="row child"><i></i><span class="chip"><svg width="24" height="24"><use href="#t-rib"/></svg><b>肋板 3</b></span></div>
            </div>
        </div>
    </main>
</div>

</body>
</html>
```

FILE: styles.css
```css
*{
    margin: 0;
    padding: 0;
    box-sizing: border-box;
}

body{
    width: 1296px;
    height: 958px;
    overflow: hidden;
    background-color: #fff;
    font-family: Roboto, "Noto Sans CJK SC", sans-serif;
    color: #808080;
    display: flex;
    flex-direction: column;
}

i{
    display: block;
}

.defs{
    position: absolute;
}


/* TOP */

.top{
    display: flex;
    height: 76px;
    border-bottom: 2px solid #d9d9d9;
    flex: none;
}

.app-btn{
    width: 57px;
    height: 57px;
    margin: 5px 0 0 6px;
    border: 2px solid #4f7fbd;
    border-radius: 6px;
    display: flex;
    align-items: center;
    justify-content: center;
    flex: none;
}

.top-main{
    flex: 1;
    min-width: 0;
}

.qat{
    display: flex;
    height: 38px;
}

.qg{
    display: grid;
    align-items: center;
    justify-items: center;
    padding-top: 4px;
    border-right: 1px solid #e2e2e2;
}

.qg1{ width: 102px; grid-template-columns: 73px 29px; }
.qg1 svg{ justify-self: end; margin-right: 6px; }
.qg2{ width: 78px; grid-template-columns: 44px 26px 8px; }
.qg3{ width: 96px; grid-template-columns: 46px 16px 34px; }
.qg3 .caret{ margin-left: 10px; }
.qg4{ width: 44px; }
.qg5{ width: 44px; }
.qg6{ width: 113px; grid-template-columns: 36px 28px 14px 35px; }
.qg6 .caret:last-child{ margin-left: 10px; }
.qg7{ width: 80px; grid-template-columns: 46px 48px; border-right: 0; }

.caret{
    width: 0;
    height: 0;
    border-left: 5px solid transparent;
    border-right: 5px solid transparent;
    border-top: 5px solid #aaa;
}

.caret.dark{
    border-top-color: #4d4d4d;
}

.more{
    width: 14px;
    height: 12px;
    border-top: 2px solid #333;
    position: relative;
    margin-top: -6px;
}

.more::after{
    content: "";
    position: absolute;
    left: 0;
    top: 3px;
    border-left: 7px solid transparent;
    border-right: 7px solid transparent;
    border-top: 7px solid #333;
}

.title{
    margin-left: 62px;
    font-family: "Open Sans", "Noto Sans CJK SC", sans-serif;
    font-size: 18px;
    letter-spacing: 0.08px;
    line-height: 44px;
    color: #bdbdbd;
    white-space: nowrap;
}

.tabs{
    display: flex;
    height: 36px;
    padding: 3px 0 0 48px;
}

.tab{
    padding: 0 22.5px;
    font-size: 17px;
    letter-spacing: 0.5px;
    line-height: 36px;
    color: #8a8a8a;
    white-space: nowrap;
}

.mono{
    font-family: "Liberation Mono", monospace;
    font-size: 15px;
    letter-spacing: 0;
}

.mono.gap{
    margin-right: 6px;
}

.tab.active{
    height: 35px;
    padding: 0 21.5px;
    background-color: #fff;
    border: 1px solid #d9d9d9;
    border-bottom: 0;
    color: #5a85bd;
    line-height: 34px;
}


/* RIBBON */

.ribbon{
    display: flex;
    height: 140px;
    padding: 9px 0 10px;
    border-bottom: 2px solid #d9d9d9;
    flex: none;
}

.group{
    display: flex;
    flex-direction: column;
    border-right: 2px solid #e0e0e0;
    flex: none;
}

.g-show{ width: 66px; }
.g-clip{ width: 162px; }
.g-view{ width: 277px; }
.g-dir{ width: 266px; }
.g-style{ width: 519px; }

.body{
    display: flex;
    height: 92px;
    flex: none;
}

.label{
    text-align: center;
    height: 27px;
    padding: 4px 0 0 3px;
    font-size: 19px;
    line-height: 24px;
    color: #808080;
}

.g-show .label{
    padding-left: 6px;
}

.big{
    display: flex;
    flex-direction: column;
    align-items: center;
    flex: none;
    font-size: 17px;
    letter-spacing: 0.7px;
    line-height: 24px;
    white-space: nowrap;
}

.big-ico{
    height: 63px;
    display: flex;
    justify-content: center;
}

.big-ico.low{
    padding-top: 3px;
}

.w40{ width: 40px; margin-left: 16px; }
.w70{ width: 70px; }
.w72{ width: 72px; }

.off{
    color: #d0d0d0;
}

.show-body{
    flex-direction: column;
    padding: 17px 0 0 17px;
}

.show-row{
    display: flex;
    align-items: center;
    gap: 9px;
    height: 16px;
}

.show-row.second{
    margin: 30px 0 0 5px;
}

.clip-body{
    padding-left: 14px;
}

.view-body{
    padding-left: 8px;
}

.view-grid{
    display: grid;
    grid-template-columns: repeat(3, 48.5px);
    grid-auto-rows: 40px;
    row-gap: 8px;
    align-items: center;
    justify-items: center;
    width: 146px;
}

.spin{
    width: 24px;
    height: 93px;
    margin: -4px 0 0 12px;
    border: 1px solid #b5b5b5;
}

.spin-cell{
    height: 29px;
    border-bottom: 1px solid #b5b5b5;
    display: flex;
    flex-direction: column;
    align-items: center;
    justify-content: center;
}

.spin-cell.last{
    height: 33px;
    border-bottom: 0;
}

.spin-cell b{
    width: 11px;
    height: 2px;
    margin-bottom: 2px;
    background-color: #777;
}

.tri{
    width: 0;
    height: 0;
    border-left: 6px solid transparent;
    border-right: 6px solid transparent;
    border-top: 6px solid #777;
}

.tri.up{
    border-top: 0;
    border-bottom: 6px solid #ddd;
}

.g-view .big{
    margin-left: 3px;
}

.dir-body{
    padding-left: 13px;
}

.small-grid{
    display: grid;
    grid-template-columns: repeat(3, 35px);
    grid-auto-rows: 34.5px;
    margin: -2px 0 0 -2px;
    align-items: center;
    justify-items: center;
}

.box-grid{
    display: grid;
    grid-template-columns: repeat(3, 47px);
    grid-template-rows: 40px 48px;
    row-gap: 4px;
    width: 158px;
    height: 106px;
    margin-top: -3px;
    padding: 3px 0 0 11px;
    border-right: 1px solid #e0e0e0;
    align-items: center;
    justify-items: center;
    align-content: start;
}

.picked{
    width: 48px;
    height: 48px;
    border: 5px solid #c3d7f1;
    display: flex;
    align-items: center;
    justify-content: center;
}

.style-tools{
    display: grid;
    grid-template-columns: 32px 30px 30px;
    grid-auto-rows: 35px;
    width: 94px;
    height: 95px;
    padding-left: 5px;
    margin: -5px 0 0 1px;
    align-items: center;
    justify-items: center;
    align-content: start;
}

.cmds{
    width: 118px;
    margin-top: -5px;
    display: flex;
    flex-direction: column;
}

.cmd{
    display: flex;
    align-items: center;
    gap: 5px;
    height: 27px;
    font-size: 17px;
    letter-spacing: 0.7px;
    white-space: nowrap;
}

.style-pick{
    width: 140px;
}

.style-pick .cmd{
    padding-left: 4px;
    height: 20px;
    margin-top: -1px;
}

.select{
    width: 140px;
    height: 35px;
    margin-top: 5px;
    border: 1px solid #b5b5b5;
    display: flex;
    align-items: center;
    justify-content: flex-end;
    padding-right: 10px;
}

.big-tri{
    border-left-width: 7px;
    border-right-width: 7px;
    border-top-width: 7px;
}


/* WORK AREA */

.work{
    display: flex;
    flex: 1;
    min-height: 0;
}

.rail{
    width: 44px;
    flex: none;
    background-color: #f5f5f5;
    padding-top: 6px;
    display: flex;
    flex-direction: column;
    gap: 15px;
}

.rail-btn{
    height: 36px;
    border-left: 2px solid #d8d8d8;
    padding-left: 3px;
    display: flex;
    align-items: center;
}

.rail-panel{
    height: 225px;
    border-left: 2px solid #2f5597;
    padding: 6px 0 0 3px;
}

.rail-text{
    writing-mode: vertical-rl;
    text-orientation: sideways;
    font-size: 17.5px;
    line-height: 20px;
    color: #7f9ccb;
    margin: 1px 0 0 5px;
}

.doc{
    flex: 1;
    min-width: 0;
    display: flex;
    flex-direction: column;
}

.doc-tabs{
    height: 39px;
    padding: 2px 0 0 2px;
    border-bottom: 1px solid #2b5597;
    flex: none;
}

.doc-tab{
    width: 330px;
    height: 36px;
    background-color: #2b5597;
    color: #f2f5fa;
    padding-left: 20px;
    display: flex;
    align-items: center;
    font-size: 18.4px;
    white-space: nowrap;
}

.doc-name{
    margin-left: 4px;
    flex: 1;
}

.doc-close{
    width: 20px;
    color: #fff;
    font-family: "DejaVu Sans", sans-serif;
    font-size: 20px;
    font-weight: bold;
}

.canvas{
    flex: 1;
    position: relative;
    background-color: #fbfdfc;
    padding-top: 60px;
    overflow: hidden;
}

.model{
    position: absolute;
    left: 296px;
    top: 305px;
}

.model *{
    vector-effect: non-scaling-stroke;
}

.edge{
    stroke: #3f454b;
    stroke-width: 1;
}

.line{
    fill: none;
    stroke: #454b52;
    stroke-width: 1;
}

.band{
    fill: none;
    stroke: #b9c2cb;
    stroke-width: 3;
}

.hole{
    fill: url(#hole);
}

.slot-a{
    fill: none;
    stroke: #41474d;
    stroke-width: 8;
    stroke-linecap: round;
}

.slot-b{
    fill: none;
    stroke: #777d85;
    stroke-width: 6;
    stroke-linecap: round;
}

.slot-c{
    fill: none;
    stroke: #fff;
    stroke-width: 3.5;
    stroke-linecap: round;
}

.mark{
    position: absolute;
    left: 969px;
    top: 608px;
    display: flex;
    gap: 7px;
}

.mark-text{
    color: #fff;
    padding-top: 4px;
}

.mark-big{
    font-size: 42px;
    font-weight: bold;
    line-height: 52px;
    white-space: nowrap;
}

.mark-small{
    font-size: 11px;
    line-height: 15px;
    letter-spacing: 4.5px;
    white-space: nowrap;
}


/* TREE */

.tree{
    position: relative;
    width: 375px;
}

.tree-bar{
    height: 14px;
    border: 2px solid #9a9a9a;
    border-right-width: 1px;
    background: linear-gradient(#f0f0f0, #c9c9c9);
    display: flex;
    align-items: center;
    justify-content: center;
    margin-bottom: 4px;
}

.grip{
    width: 38px;
    height: 2px;
    background-image: repeating-linear-gradient(90deg, #6a7fa8 0 2px, transparent 2px 4px);
}

.root{
    height: 23px;
    display: flex;
    align-items: center;
    padding-left: 8px;
}

.row{
    height: 24px;
    display: grid;
    grid-template-columns: 24px 27px auto;
    grid-template-rows: 24px;
    align-items: center;
    justify-items: start;
    padding-left: 23px;
}

.row.child{
    grid-template-columns: 27px auto;
    padding-left: 82px;
}

.chip{
    display: inline-grid;
    grid-template-columns: 29px auto;
    grid-template-rows: 20px;
    align-items: center;
    height: 22px;
    padding-right: 8px;
    border: 1px solid #a9b9c5;
    background: linear-gradient(#fbfdfd, #e6ebee);
    font-size: 19px;
    line-height: 20px;
    color: #8c8c8c;
    white-space: nowrap;
}

.chip span,
.chip b{
    padding-top: 2px;
}

.dark-txt{
    color: #262626;
}

.root-txt{
    font-size: 18px;
}

.latin{
    font-size: 17px;
}

.chip b{
    font-size: 19.5px;
    color: #0d0d0d;
    font-weight: bold;
}

.chip b.dim{
    color: #8c8c8c;
}

.exp{
    width: 13px;
    height: 13px;
    margin-top: -3px;
    border: 1px solid #8f8f8f;
    background: linear-gradient(#fff, #d8d4c8);
    position: relative;
}

.exp::before{
    content: "";
    position: absolute;
    left: 2px;
    top: 5px;
    width: 7px;
    height: 1px;
    background-color: #222;
}

.exp.plus::after{
    content: "";
    position: absolute;
    left: 5px;
    top: 2px;
    width: 1px;
    height: 7px;
    background-color: #222;
}

.check{
    width: 19px;
    height: 17px;
    border: 2px solid #4a6797;
    background-color: #fff;
    margin-top: -3px;
    position: relative;
}

.check.on::after{
    content: "";
    position: absolute;
    left: 4px;
    top: 0;
    width: 7px;
    height: 10px;
    border-right: 3px solid #1d3a6c;
    border-bottom: 3px solid #1d3a6c;
    transform: rotate(40deg);
}

.seq{
    grid-column: 2 / 4;
    width: 275px;
    height: 22px;
    display: flex;
    align-items: center;
    background: linear-gradient(#f2a52e, #ffd36a 45%, #f7b52e 70%, #f0a32a);
    border: 1px solid #efa838;
}

.seq-grip{
    width: 7px;
    height: 20px;
    margin-left: 15px;
    background-image: repeating-linear-gradient(#fff 0 4px, transparent 4px 7px);
}

.seq-txt{
    margin-left: 7px;
    font-size: 20px;
    font-weight: bold;
    line-height: 20px;
    color: #0d0d0d;
    flex: 1;
}

.seq-arrow{
    width: 0;
    height: 0;
    margin-right: 15px;
    border-top: 7px solid transparent;
    border-bottom: 7px solid transparent;
    border-right: 25px solid #fff;
}
```
